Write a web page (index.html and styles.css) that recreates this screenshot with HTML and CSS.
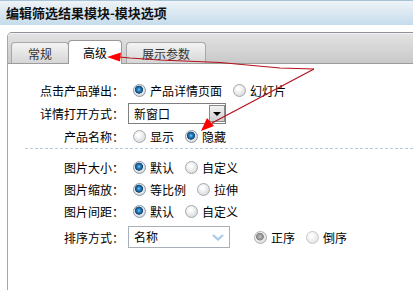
FILE: index.html
```html
<!DOCTYPE html>
<html lang="zh-CN">
<head>
  <meta charset="UTF-8" />
  <title>编辑筛选结果模块-模块选项</title>
  <link rel="stylesheet" href="styles.css">
</head>
<body>
  <div class="titlebar">编辑筛选结果模块-模块选项</div>

  <div class="panel">
    <div class="tabs">
      <span class="tab t1">常规</span>
      <span class="tab t2 active">高级</span>
      <span class="tab t3">展示参数</span>
    </div>

    <div class="content">
      <div class="group first">
        <div class="row">
          <span class="lbl">点击产品弹出：</span>
          <span class="ctrl"><i class="radio on"></i>产品详情页面<i class="radio next"></i>幻灯片</span>
        </div>
        <div class="row r2">
          <span class="lbl">详情打开方式：</span>
          <span class="ctrl">
            <span class="select">新窗口<span class="drop"><b></b></span></span>
          </span>
        </div>
        <div class="row">
          <span class="lbl">产品名称：</span>
          <span class="ctrl"><i class="radio"></i>显示<i class="radio on next"></i>隐藏</span>
        </div>
      </div>

      <div class="group">
        <div class="row">
          <span class="lbl">图片大小：</span>
          <span class="ctrl"><i class="radio on"></i>默认<i class="radio next"></i>自定义</span>
        </div>
        <div class="row">
          <span class="lbl">图片缩放：</span>
          <span class="ctrl"><i class="radio on"></i>等比例<i class="radio next"></i>拉伸</span>
        </div>
        <div class="row">
          <span class="lbl">图片间距：</span>
          <span class="ctrl"><i class="radio on"></i>默认<i class="radio next"></i>自定义</span>
        </div>
        <div class="row r-sort">
          <span class="lbl">排序方式：</span>
          <span class="ctrl">
            <span class="select light">名称
              <svg class="chev" width="14" height="9" viewBox="0 0 14 9"><path d="M1 1.5 L7 7 L13 1.5 L11 0.5 L7 4 L3 0.5 Z" fill="#a9cbeb"/></svg>
            </span>
            <i class="radio grey-on sort"></i>正序<i class="radio grey next"></i>倒序
          </span>
        </div>
      </div>
    </div>
  </div>

  <!-- annotation arrows drawn over the screenshot -->
  <svg class="marks" width="413" height="290" viewBox="0 0 413 290">
    <polyline points="119,57 130,58 160,60 220,62.5 280,68 314,69" fill="none" stroke="#b3101c" stroke-width="1.2"/>
    <polygon points="107,57 121,52.5 120,61.5" fill="#f00"/>
    <polyline points="314,69 212,123" fill="none" stroke="#b3101c" stroke-width="1.2"/>
    <polygon points="201,131 207,118 214,126" fill="#f00"/>
  </svg>
</body>
</html>
```

FILE: styles.css
```css
body {
  margin: 0;
  font-family: "Noto Sans CJK SC", "DejaVu Sans", sans-serif;
  font-size: 12px;
  color: #000;
  background: #fff;
  width: 413px;
  height: 290px;
  overflow: hidden;
  position: relative;
}

.titlebar {
  height: 24px;
  line-height: 24px;
  padding-left: 6px;
  font-size: 13px;
  font-weight: bold;
  color: #111;
  border-top: 1px solid #a9c3d6;
  background: linear-gradient(#eef3f7, #c5dcec);
}

.panel {
  margin: 7px 0 0 7px;
  height: 260px;
  border-top: 1px solid #8e9499;
  border-left: 1px solid #9aa7bf;
  border-top-left-radius: 5px;
}

.tabs {
  height: 29px;
  padding-left: 3px;
  display: flex;
  align-items: flex-end;
  border-top: 1px solid #f2f2f2;
  border-bottom: 1px solid #9c9c9c;
  border-top-left-radius: 4px;
  background: linear-gradient(#e2e2e2, #c9c9c9);
}

.tab {
  height: 21px;
  line-height: 21px;
  text-align: center;
  color: #333;
  border: 1px solid #a8a8a8;
  border-bottom: none;
  border-radius: 4px 4px 0 0;
  background: linear-gradient(#f4f4f4, #d6d6d6);
  box-sizing: border-box;
  margin-bottom: 0;
}

.t1 { width: 58px; }
.t2 { width: 54px; }
.t3 { width: 80px; margin-left: 4px; }

.tab.active {
  height: 24px;
  line-height: 24px;
  background: #fff;
  color: #000;
  border-color: #999;
  margin-bottom: -1px;
  margin-left: -1px;
  position: relative;
}

.content {
  padding-top: 15px;
}

.group.first {
  border-bottom: 1px dashed #b5cadd;
  margin-left: 17px;
  padding-bottom: 1px;
}

.group.first .lbl {
  width: 99px;
}

.group {
  padding-top: 7px;
}

.group.first {
  padding-top: 0;
}

.row {
  display: flex;
  align-items: center;
  height: 22px;
}

.row.r2 {
  height: 24px;
}

.row.r-sort {
  height: 24px;
  margin-top: 3px;
}

.lbl {
  width: 116px;
  text-align: right;
  flex-shrink: 0;
}

.ctrl {
  display: flex;
  align-items: center;
  padding-left: 4px;
  white-space: nowrap;
}

.radio {
  display: inline-block;
  width: 13px;
  height: 13px;
  box-sizing: border-box;
  border-radius: 50%;
  border: 1px solid #a3a9b0;
  background: radial-gradient(circle at 40% 35%, #ffffff 10%, #d2d4d6 90%);
  margin: 0 4px 0 5px;
}

.radio.next {
  margin-left: 11px;
}

.radio.on {
  border-color: #8c99a6;
  background:
    radial-gradient(circle at 45% 42%, #8fd0f5 0, #2a86c8 1.5px, #11588f 3.2px, #1e4a6e 3.8px, transparent 4.3px),
    radial-gradient(circle at 40% 35%, #ffffff 10%, #cfd3d7 90%);
}

.radio.grey-on {
  border-color: #b0b0b0;
  background:
    radial-gradient(circle at 45% 42%, #d0d0d0 0, #9a9a9a 2px, #888 3.6px, transparent 4.2px),
    radial-gradient(circle at 40% 35%, #ffffff 10%, #d6d6d6 90%);
}

.radio.grey {
  border-color: #c8c8c8;
  background: radial-gradient(circle at 40% 35%, #ffffff 10%, #dedede 90%);
}

.radio.sort {
  margin-left: 24px;
}

.select {
  position: relative;
  display: inline-block;
  width: 98px;
  height: 21px;
  line-height: 19px;
  box-sizing: border-box;
  padding-left: 5px;
  border: 1px solid #7f7f7f;
  background: #fff;
}

.drop {
  position: absolute;
  right: 0;
  top: 1px;
  width: 16px;
  height: 17px;
  border: 1px solid #8a8a8a;
  box-sizing: border-box;
  background: linear-gradient(#f2f2f2, #cfcfcf);
}

.drop b {
  position: absolute;
  left: 3px;
  top: 6px;
  width: 0;
  height: 0;
  border-left: 4px solid transparent;
  border-right: 4px solid transparent;
  border-top: 4px solid #000;
}

.select.light {
  width: 102px;
  height: 22px;
  line-height: 20px;
  border-color: #a9afb6;
}

.chev {
  position: absolute;
  right: 4px;
  top: 7px;
}

.marks {
  position: absolute;
  left: 0;
  top: 0;
  pointer-events: none;
}
```
